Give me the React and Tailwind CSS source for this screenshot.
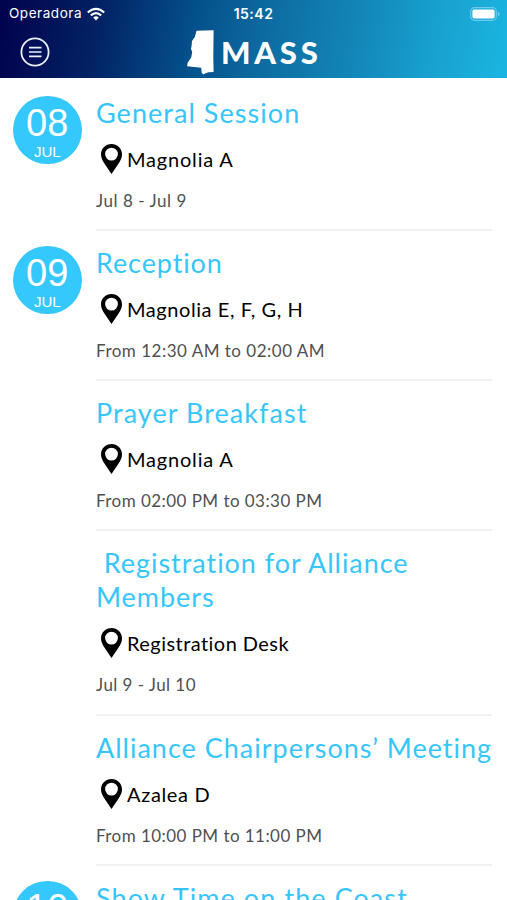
import React from "react";

const days = [
  {
    day: "08",
    month: "JUL",
    events: [
      { title: "General Session", ts: "tracking-[1.05px]", place: "Magnolia A", ps: "tracking-[0.8px]", time: "Jul 8 - Jul 9", ms: "tracking-[0.55px]" },
    ],
  },
  {
    day: "09",
    month: "JUL",
    events: [
      { title: "Reception", ts: "tracking-[0.9px]", place: "Magnolia E, F, G, H", ps: "tracking-[0.57px]", time: "From 12:30 AM to 02:00 AM", ms: "tracking-[0.5px]" },
      { title: "Prayer Breakfast", ts: "tracking-[1.05px]", place: "Magnolia A", ps: "tracking-[0.8px]", time: "From 02:00 PM to 03:30 PM", ms: "tracking-[0.45px]" },
      { title: "\u00a0Registration for Alliance Members", ts: "tracking-[0.95px]", place: "Registration Desk", ps: "tracking-[0.45px]", time: "Jul 9 - Jul 10", ms: "tracking-[0.45px]" },
      { title: "Alliance Chairpersons’ Meeting", ts: "tracking-[1px]", place: "Azalea D", ps: "tracking-[0.65px]", time: "From 10:00 PM to 11:00 PM", ms: "tracking-[0.45px]" },
    ],
  },
  {
    day: "10",
    month: "JUL",
    events: [
      { title: "Show Time on the Coast", ts: "tracking-[1.08px]", place: "Magnolia A", ps: "tracking-[0.8px]", time: "Jul 10 - Jul 11", ms: "tracking-[0.45px]" },
    ],
  },
];

function Pin() {
  return (
    <svg viewBox="0 0 21 30" className="h-[30px] w-[21px] shrink-0" aria-hidden="true">
      <path
        fillRule="evenodd"
        d="M10.5 0C4.7 0 0 4.6 0 10.4c0 3.4 1.7 6.200 3.400 9L10.500 30l7.100-10.600c1.700-2.800 3.400-5.600 3.400-9C21 4.600 16.300 0 10.500 0Zm0 3.700a6.400 6.400 0 1 1 0 12.800 6.400 6.400 0 0 1 0-12.800Z"
      />
    </svg>
  );
}

function Header() {
  return (
    <header className="h-[78px] bg-[linear-gradient(100deg,#02014d_0%,#022365_20%,#04508a_38%,#0d6da2_53%,#1283b5_68%,#18a1cf_85%,#1bb5e2_100%)] text-white">
      <div className="grid h-[27px] grid-cols-3 items-center font-['Inter',sans-serif] text-[13px]">
        <div className="flex items-center gap-[5px] pl-[9px]">
          <span className="text-[13.500px] tracking-[0.550px]">Operadora</span>
          <svg viewBox="0 0 18 13" className="h-[14px] w-[18px]" aria-hidden="true">
            <path d="M.800 5Q9-2.400 17.200 5M3.800 7.900Q9 3.400 14.200 7.900" fill="none" stroke="white" strokeWidth="2.200" />
            <path d="M6.200 10Q9 7.600 11.800 10L9 12.900Z" fill="white" />
          </svg>
        </div>
        <span className="text-center text-[14px] font-semibold tracking-[0.500px]">15:42</span>
        <div className="flex items-center justify-end pr-[7px]">
          <svg viewBox="0 0 30 14" className="h-[14px] w-[30px]" aria-hidden="true">
            <rect x="0.700" y="0.700" width="25.600" height="12.600" rx="3.800" fill="none" stroke="#6fcbea" strokeWidth="1.200" />
            <rect x="2.400" y="2.400" width="22.200" height="9.200" rx="1.800" fill="white" />
            <path d="M27.800 4.800q2 .6 2 2.200t-2 2.200Z" fill="#6fcbea" />
          </svg>
        </div>
      </div>
      <div className="grid h-[51px] grid-cols-[187px_1fr] items-center">
        <svg viewBox="0 0 30 30" className="mb-[2px] ml-5 h-[30px] w-[30px]" fill="none" stroke="#e9efff" aria-hidden="true">
          <circle cx="15" cy="15" r="13.600" strokeWidth="1.800" />
          <path d="M9 10.700h12.500M9 15h12.500M9 19.300h12.500" strokeWidth="1.700" />
        </svg>
        <div className="flex items-center gap-[7px]">
          <svg viewBox="0 0 27 45" className="h-[45px] w-[27px]" fill="white" aria-hidden="true">
            <path d="M9.500.8 26.600.3 26.300 27l.300 15-5 .2-3.200 1-1.800 1.300-1.900-1.500-.5-5.300L.200 36.300l.3-3.300 3.700-5.500 1-5.500-1.200-3 .7-4 .300-4 2.800-4Z" />
          </svg>
          <span className="mt-[-1px] font-['Lato',sans-serif] text-[31px] font-black leading-[45px] tracking-[3.800px]">MASS</span>
        </div>
      </div>
    </header>
  );
}

function Event({ event }) {
  return (
    <article className="flex flex-col border-b-2 border-[#f1f1f1] pb-[17.250px] pt-[15px]">
      <h2 className={`-mr-2 text-[27px] leading-[34px] text-[#37c6fb] ${event.ts}`}>{event.title}</h2>
      <div className="mt-[13px] flex h-[32px] items-center gap-[5px] pl-[5px]">
        <Pin />
        <span className={`text-[20px] leading-[30px] text-black ${event.ps}`}>{event.place}</span>
      </div>
      <p className={`mt-[15px] text-[17px] leading-[22px] text-[#505050] ${event.ms}`}>{event.time}</p>
    </article>
  );
}

export default function App() {
  return (
    <div className="h-[900px] w-full overflow-hidden bg-white font-['Lato',sans-serif]">
      <Header />
      <main className="pt-[2.600px]">
        {days.map((d) => (
          <section key={d.day} className="flex items-start pl-[13px] pr-[15px]">
            <div className="mr-[14.500px] mt-[15px] flex size-[68.500px] shrink-0 flex-col items-center rounded-full bg-[#34c8fc] pt-[7px] font-['Liberation_Sans',sans-serif] text-white">
              <span className="text-[38px] leading-[40px]">{d.day}</span>
              <span className="text-[15px] leading-[18px]">{d.month}</span>
            </div>
            <div className="min-w-0 flex-1">
              {d.events.map((e) => (
                <Event key={e.title} event={e} />
              ))}
            </div>
          </section>
        ))}
      </main>
    </div>
  );
}
